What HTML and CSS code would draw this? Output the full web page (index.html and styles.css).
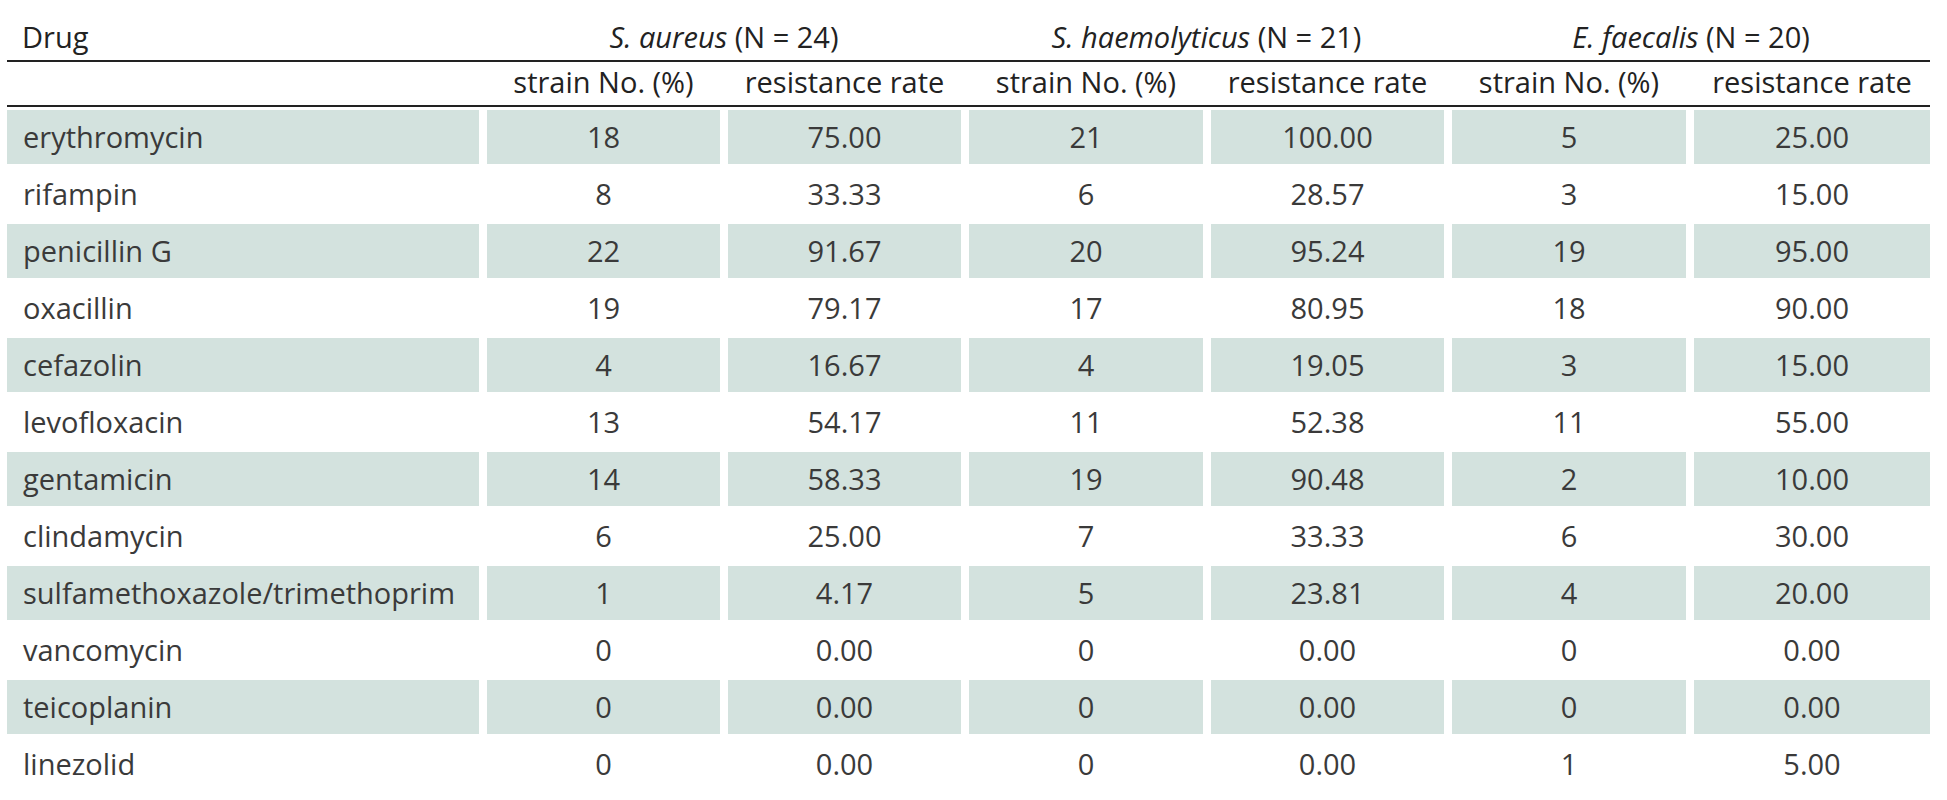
FILE: index.html
```html
<!DOCTYPE html>
<html>
<head>
<meta charset="utf-8">
<link rel="stylesheet" href="styles.css">
</head>
<body>
<div class="tbl">
  <div class="h1 drug">Drug</div>
  <div class="h1 grp"><i>S. aureus</i> (N = 24)</div>
  <div class="h1 grp"><i>S. haemolyticus</i> (N = 21)</div>
  <div class="h1 grp"><i>E. faecalis</i> (N = 20)</div>
  <div class="rule"></div>
  <div class="h2"></div>
  <div class="h2">strain No. (%)</div>
  <div class="h2">resistance rate</div>
  <div class="h2">strain No. (%)</div>
  <div class="h2">resistance rate</div>
  <div class="h2">strain No. (%)</div>
  <div class="h2">resistance rate</div>
  <div class="rule rule2"></div>

  <div class="c n s">erythromycin</div><div class="c s">18</div><div class="c s">75.00</div><div class="c s">21</div><div class="c s">100.00</div><div class="c s">5</div><div class="c s">25.00</div>
  <div class="c n">rifampin</div><div class="c">8</div><div class="c">33.33</div><div class="c">6</div><div class="c">28.57</div><div class="c">3</div><div class="c">15.00</div>
  <div class="c n s">penicillin G</div><div class="c s">22</div><div class="c s">91.67</div><div class="c s">20</div><div class="c s">95.24</div><div class="c s">19</div><div class="c s">95.00</div>
  <div class="c n">oxacillin</div><div class="c">19</div><div class="c">79.17</div><div class="c">17</div><div class="c">80.95</div><div class="c">18</div><div class="c">90.00</div>
  <div class="c n s">cefazolin</div><div class="c s">4</div><div class="c s">16.67</div><div class="c s">4</div><div class="c s">19.05</div><div class="c s">3</div><div class="c s">15.00</div>
  <div class="c n">levofloxacin</div><div class="c">13</div><div class="c">54.17</div><div class="c">11</div><div class="c">52.38</div><div class="c">11</div><div class="c">55.00</div>
  <div class="c n s">gentamicin</div><div class="c s">14</div><div class="c s">58.33</div><div class="c s">19</div><div class="c s">90.48</div><div class="c s">2</div><div class="c s">10.00</div>
  <div class="c n">clindamycin</div><div class="c">6</div><div class="c">25.00</div><div class="c">7</div><div class="c">33.33</div><div class="c">6</div><div class="c">30.00</div>
  <div class="c n s">sulfamethoxazole/trimethoprim</div><div class="c s">1</div><div class="c s">4.17</div><div class="c s">5</div><div class="c s">23.81</div><div class="c s">4</div><div class="c s">20.00</div>
  <div class="c n">vancomycin</div><div class="c">0</div><div class="c">0.00</div><div class="c">0</div><div class="c">0.00</div><div class="c">0</div><div class="c">0.00</div>
  <div class="c n s">teicoplanin</div><div class="c s">0</div><div class="c s">0.00</div><div class="c s">0</div><div class="c s">0.00</div><div class="c s">0</div><div class="c s">0.00</div>
  <div class="c n">linezolid</div><div class="c">0</div><div class="c">0.00</div><div class="c">0</div><div class="c">0.00</div><div class="c">1</div><div class="c">5.00</div>
</div>
</body>
</html>
```

FILE: styles.css
```css
html, body {
  margin: 0;
  padding: 0;
  background: #ffffff;
}

body {
  font-family: "Open Sans", "Noto Sans", sans-serif;
  font-size: 29px;
  color: #3a3a3a;
}

.tbl {
  display: grid;
  grid-template-columns: 472px 233px 233px 234px 233px 234px 236px;
  column-gap: 8px;
  margin-left: 7px;
  width: 1923px;
}

.h1 {
  height: 60px;
  box-sizing: border-box;
  padding-top: 17px;
  line-height: 40px;
  color: #222222;
  text-align: center;
  white-space: nowrap;
}

.h1.drug {
  text-align: left;
  padding-left: 15px;
}

.grp {
  grid-column: span 2;
}

.grp i {
  font-style: italic;
}

.rule {
  grid-column: 1 / -1;
  height: 2px;
  background: #222222;
}

.h2 {
  height: 43px;
  line-height: 40px;
  color: #222222;
  text-align: center;
  white-space: nowrap;
}

.c {
  height: 54px;
  margin-top: 3px;
  line-height: 54px;
  text-align: center;
  white-space: nowrap;
}

.c.n {
  text-align: left;
  padding-left: 16px;
}

.s {
  background: #d3e2de;
}
```
